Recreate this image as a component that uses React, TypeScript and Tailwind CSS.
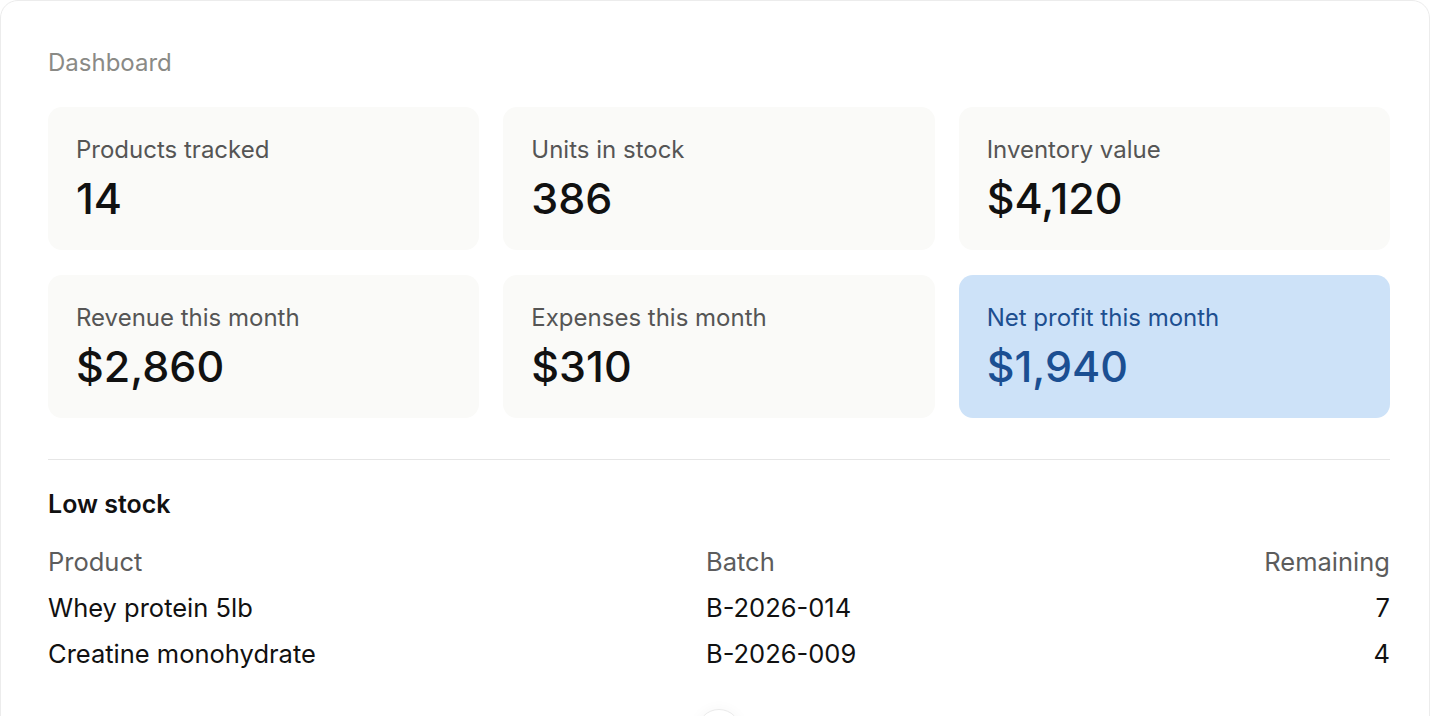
import React from "react";

type Stat = { label: string; value: string; accent?: boolean };

const stats: Stat[] = [
  { label: "Products tracked", value: "14" },
  { label: "Units in stock", value: "386" },
  { label: "Inventory value", value: "$4,120" },
  { label: "Revenue this month", value: "$2,860" },
  { label: "Expenses this month", value: "$310" },
  { label: "Net profit this month", value: "$1,940", accent: true },
];

const lowStock = [
  { product: "Whey protein 5lb", batch: "B-2026-014", remaining: 7 },
  { product: "Creatine monohydrate", batch: "B-2026-009", remaining: 4 },
];

function StatCard({ label, value, accent }: Stat) {
  return (
    <div
      className={
        accent
          ? "h-[143px] rounded-[14px] bg-[#cde2f8] px-[28px] pt-[28px]"
          : "h-[143px] rounded-[14px] bg-[#fafaf8] px-[28px] pt-[28px]"
      }
    >
      <div
        className={
          accent
            ? "text-[24px] leading-[30px] text-[#1d4f90]"
            : "text-[24px] leading-[30px] text-[#555555]"
        }
      >
        {label}
      </div>
      <div
        className={
          accent
            ? "mt-[7px] text-[43px] leading-[52px] font-medium text-[#1b4f92]"
            : "mt-[7px] text-[43px] leading-[52px] font-medium text-[#111111]"
        }
      >
        {value}
      </div>
    </div>
  );
}

export default function App() {
  return (
    <div
      className="relative h-[716px] w-full overflow-hidden bg-white"
      style={{ fontFamily: "Inter, 'Noto Sans', sans-serif" }}
    >
      <div className="h-[740px] w-full rounded-[18px] border border-[#ececec] bg-white pl-[47px] pr-[39px] pt-[47px]">
        <h1 className="text-[24px] leading-[30px] font-normal text-[#8a8a86]">Dashboard</h1>

        <div className="mt-[29px] grid grid-cols-3 gap-x-[24px] gap-y-[25px]">
          {stats.map((s) => (
            <StatCard key={s.label} {...s} />
          ))}
        </div>

        <div className="mt-[41px] border-t border-[#e6e6e6]" />

        <h2 className="mt-[29px] text-[25px] leading-[30px] font-semibold text-[#111111]">Low stock</h2>

        <div className="mt-[20px] grid grid-cols-[658px_1fr_auto] text-[25.5px] leading-[46px]">
          <div className="text-[#5c5c5c]">Product</div>
          <div className="text-[#5c5c5c]">Batch</div>
          <div className="text-right text-[#5c5c5c]">Remaining</div>
          {lowStock.map((r) => (
            <React.Fragment key={r.batch}>
              <div className="text-[#111111]">{r.product}</div>
              <div className="text-[#111111]">{r.batch}</div>
              <div className="text-right text-[#111111]">{r.remaining}</div>
            </React.Fragment>
          ))}
        </div>
      </div>

      {/* floating round control peeking in at the bottom edge */}
      <div className="absolute left-[697px] top-[709px] h-[44px] w-[44px] rounded-full border border-[#ebebeb] bg-white shadow-[0_0_14px_rgba(0,0,0,0.04)]" />
    </div>
  );
}
